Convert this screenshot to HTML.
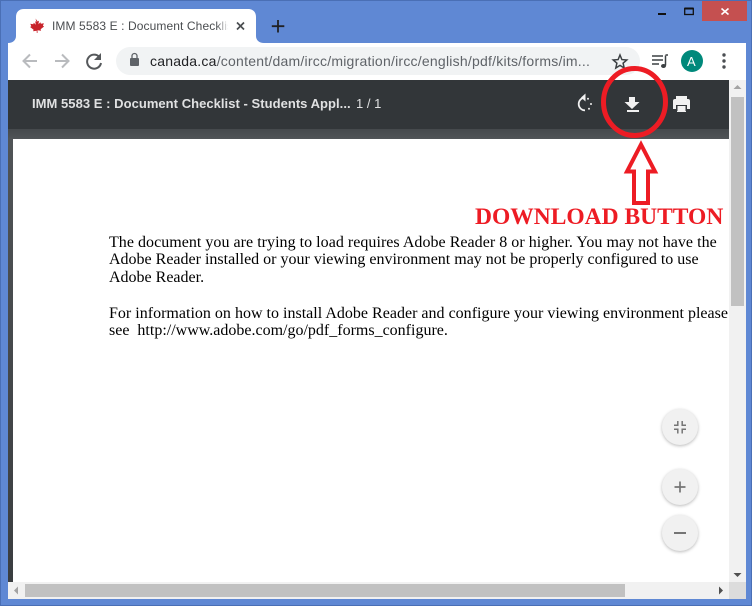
<!DOCTYPE html>
<html><head><meta charset="utf-8"><style>
html,body{margin:0;padding:0;background:#fff}
#r{position:relative;width:752px;height:608px;overflow:hidden;background:#fff;font-family:"Liberation Sans",sans-serif}
#r div,#r svg,#r span{position:absolute}
.t{white-space:nowrap}
.doc{font-family:"Liberation Serif",serif;font-size:16px;color:#000;left:109px;white-space:nowrap;line-height:18px}
.fab{left:662px;width:36px;height:36px;border-radius:50%;background:#f1f1f1;box-shadow:0 1px 3px rgba(0,0,0,.28)}
</style></head><body><div id="r">
<div style="left:0;top:0;width:752px;height:606px;background:#5f88d4;box-shadow:inset 0 0 0 1px #4a6fb5"></div>

<!-- window buttons -->
<div style="left:702px;top:1px;width:45px;height:20px;background:#c55050"></div>
<svg style="left:0;top:0" width="752" height="30">
<path d="M658 14h8" stroke="#111" stroke-width="2"/>
<rect x="684.700" y="8.500" width="8.600" height="6" fill="none" stroke="#111" stroke-width="1.300"/>
<path d="M684.500 8.500h9" stroke="#111" stroke-width="2"/>
<path d="M721.500 8.500l7 6M728.500 8.500l-7 6" stroke="#fff" stroke-width="1.600"/>
</svg>

<!-- tab -->
<svg style="left:0;top:0" width="300" height="45">
<path d="M8 43C13 43 16 40 16 36V17C16 12 19 9 24 9H248C253 9 256 12 256 17V36C256 40 259 43 264 43Z" fill="#fff"/>
<g transform="translate(-.500 0)">
<path d="M36 18.500l2.200 3 1.300-.7-.6 3.500 2-2 .5 1.400 3-.5-1 2.600 1.200.7-3.500 2.800.5 1.400-3.600-.4V33h-.7l-.1-2.200-3.600.4.500-1.400-3.500-2.800 1.200-.7-1-2.600 3 .5.500-1.400 2 2-.6-3.500 1.300.7z" fill="#c8242b"/>
</g>
<path d="M237 22.500l7 7M244 22.500l-7 7" stroke="#4a4d50" stroke-width="1.700"/>
<path d="M278 20v12.500M271.800 26.200h12.500" stroke="#202124" stroke-width="1.800"/>
</svg>
<div class="t" style="left:52px;top:18px;width:176px;overflow:hidden;font-size:12px;line-height:16px;color:#4a4d50;letter-spacing:.1px">IMM 5583 E : Document Checklist - Students</div>
<div style="left:216px;top:16px;width:13px;height:20px;background:linear-gradient(90deg,rgba(255,255,255,0),#fff)"></div>

<!-- toolbar -->
<div style="left:8px;top:43px;width:738px;height:37px;background:#fff"></div>
<div style="left:116px;top:47px;width:524px;height:28px;border-radius:14px;background:#f1f3f4"></div>
<svg style="left:0;top:43px" width="752" height="37">
<path d="M37 18H24M30 11.500l-6.500 6.500 6.500 6.500" fill="none" stroke="#b9bbbe" stroke-width="2"/>
<path d="M55 18h13M62 11.500l6.500 6.500-6.500 6.500" fill="none" stroke="#b9bbbe" stroke-width="2"/>
<path d="M99.500 14.200A7 7 0 1 0 101 20" fill="none" stroke="#55585b" stroke-width="2"/>
<path d="M101 10v7h-7z" fill="#55585b"/>
<rect x="130" y="15" width="9" height="8" rx="1" fill="#5f6368"/>
<path d="M132 15v-2a2.500 2.500 0 0 1 5 0v2" fill="none" stroke="#5f6368" stroke-width="1.300"/>
<path d="M620 12l1.900 4.600 4.900.4-3.700 3.200 1.100 4.800-4.200-2.600-4.200 2.600 1.100-4.800-3.700-3.200 4.900-.4z" fill="none" stroke="#3c4043" stroke-width="1.500"/>
<path d="M652 13h11M652 17h11M652 21h7" stroke="#3c4043" stroke-width="1.400"/>
<path d="M665.500 12.500v10" stroke="#3c4043" stroke-width="1.500"/><ellipse cx="663.500" cy="23" rx="2.500" ry="2" fill="#3c4043"/>
<path d="M665.500 12h2.500" stroke="#3c4043" stroke-width="1.500"/>
<circle cx="692" cy="18" r="11" fill="#00897b"/>
<circle cx="724" cy="12" r="1.700" fill="#4b4e52"/><circle cx="724" cy="18" r="1.700" fill="#4b4e52"/><circle cx="724" cy="24" r="1.700" fill="#4b4e52"/>
</svg>
<div class="t" style="left:150px;top:53px;font-size:14px;line-height:16px;color:#5f6368;letter-spacing:.23px"><span style="position:static;color:#202124">canada.ca</span>/content/dam/ircc/migration/ircc/english/pdf/kits/forms/im...</div>
<div class="t" style="left:687px;top:54px;font-size:13px;line-height:15px;color:#fff">A</div>

<!-- viewer -->
<div style="left:8px;top:80px;width:721px;height:49px;background:#323639"></div>
<div style="left:8px;top:129px;width:721px;height:10px;background:linear-gradient(#45494c,#505457)"></div>
<div style="left:8px;top:139px;width:5px;height:443px;background:linear-gradient(#505457,#3a3d40)"></div>
<div style="left:13px;top:139px;width:716px;height:443px;background:#fff"></div>
<div class="t" style="left:32px;top:96px;font-size:13px;line-height:16px;font-weight:bold;color:#e0e1e2;letter-spacing:.04px">IMM 5583 E : Document Checklist - Students Appl...</div>
<div class="t" style="left:356px;top:96px;font-size:13px;line-height:16px;color:#e0e1e2">1 / 1</div>
<svg style="left:560px;top:80px" width="140" height="50">
<path d="M25 17.700A6.300 6.300 0 0 0 25 30.300" fill="none" stroke="#f1f1f1" stroke-width="1.800"/>
<path d="M25.500 13.500v8l-4.500-4z" fill="#f1f1f1"/>
<circle cx="28" cy="18.800" r="1" fill="#f1f1f1"/><circle cx="31" cy="24" r="1" fill="#f1f1f1"/><circle cx="29" cy="28.800" r="1" fill="#f1f1f1"/>
<path d="M69 17h6v5h4.500L72 29l-7.500-7H69z" fill="#f1f1f1"/>
<rect x="67" y="30" width="12" height="2" fill="#f1f1f1"/>
<rect x="116" y="16" width="11" height="4" fill="#f1f1f1"/>
<path d="M113 21a2 2 0 0 1 2-2h13a2 2 0 0 1 2 2v8h-4v3h-9v-3h-4z" fill="#f1f1f1"/>
<rect x="116" y="25" width="11" height="6" fill="#323639"/>
<rect x="117.500" y="26" width="8" height="5" fill="#f1f1f1"/>
</svg>

<!-- document text -->
<div class="doc" style="top:234px;letter-spacing:.033px">The document you are trying to load requires Adobe Reader 8 or higher. You may not have the</div>
<div class="doc" style="top:251px">Adobe Reader installed or your viewing environment may not be properly configured to use</div>
<div class="doc" style="top:269px">Adobe Reader.</div>
<div class="doc" style="top:305px;letter-spacing:.01px">For information on how to install Adobe Reader and configure your viewing environment please</div>
<div class="doc" style="top:322px">see&nbsp; http://www.adobe.com/go/pdf_forms_configure.</div>

<!-- FABs -->
<div class="fab" style="top:409px"></div>
<div class="fab" style="top:469px"></div>
<div class="fab" style="top:515px"></div>
<svg style="left:662px;top:409px" width="36" height="142">
<path d="M12 16.200H15.800V12M24 16.200H20.200V12M12 20.200H15.800V24.500M24 20.200H20.200V24.500" fill="none" stroke="#757575" stroke-width="1.500"/>
<path d="M18 72.500v11M12.500 78h11" stroke="#757575" stroke-width="1.700"/>
<path d="M12 124h12" stroke="#757575" stroke-width="2"/>
</svg>

<!-- scrollbars -->
<div style="left:729px;top:80px;width:17px;height:502px;background:#f1f1f1"></div>
<div style="left:731px;top:97px;width:13px;height:209px;background:#c1c1c1"></div>
<div style="left:8px;top:582px;width:738px;height:17px;background:#f1f1f1"></div>
<div style="left:25px;top:584px;width:600px;height:13px;background:#c1c1c1"></div>
<div style="left:729px;top:582px;width:17px;height:17px;background:#dcdcdc"></div>
<svg style="left:0;top:0" width="752" height="608">
<path d="M737.500 85l4 4h-8z" fill="#a3a3a3"/>
<path d="M737.500 577l-4-4h8z" fill="#505050"/>
<path d="M14 590.500l4-4v8z" fill="#a3a3a3"/>
<path d="M723 590.500l-4-4v8z" fill="#505050"/>
</svg>

<!-- annotations -->
<svg style="left:0;top:0" width="752" height="608">
<ellipse cx="634.500" cy="102" rx="31" ry="33.500" fill="none" stroke="#ed1c24" stroke-width="5"/>
<path d="M641 144.500L655 171.500H648V203H634V171.500H627z" fill="none" stroke="#ed1c24" stroke-width="4"/>
</svg>
<div class="t" style="left:475px;top:204px;font-family:'Liberation Serif',serif;font-weight:bold;font-size:23.500px;line-height:27px;color:#ed1c24">DOWNLOAD BUTTON</div>
</div></body></html>
